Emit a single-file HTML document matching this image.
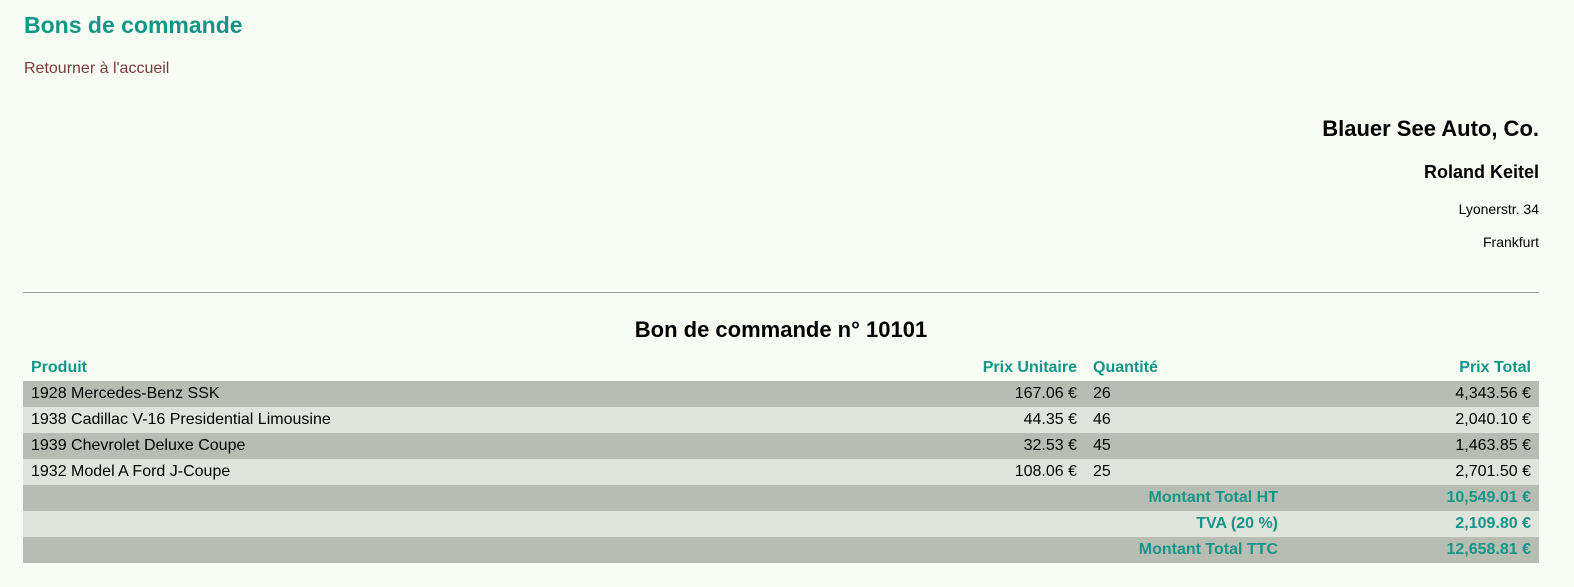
<!DOCTYPE html>
<html><head><meta charset="utf-8"><style>
body{margin:0;background:#f7fdf3;font-family:"Liberation Sans",Arial,sans-serif;color:#000;}
.wrap{position:relative;width:1574px;height:587px;}
.abs{position:absolute;white-space:nowrap;}
h1{position:absolute;left:24px;top:12px;margin:0;font-size:23px;color:#139688;font-weight:bold;}
.link{left:24px;top:60px;font-size:16px;color:#7a3b3b;}
.r{right:35px;text-align:right;}
hr{position:absolute;left:23px;top:292px;width:1516px;margin:0;border:0;border-top:1px solid #999;}
h2{position:absolute;left:0;width:1562px;text-align:center;top:317px;margin:0;font-size:22px;}
table{position:absolute;left:23px;top:355px;border-collapse:collapse;font-size:16px;width:1516px;}
td,th{height:26px;padding:0 8px;box-sizing:border-box;}
th{color:#139688;font-weight:bold;}
tr.d td{background:#b8bdb3;}tr.l td{background:#e0e4dc;}
.t{color:#139688;font-weight:bold;}
</style></head><body><div class="wrap">
<h1>Bons de commande</h1>
<div class="abs link">Retourner à l'accueil</div>
<div class="abs r" style="top:116px;font-size:22px;font-weight:bold">Blauer See Auto, Co.</div>
<div class="abs r" style="top:162px;font-size:18px;font-weight:bold">Roland Keitel</div>
<div class="abs r" style="top:201px;font-size:14px">Lyonerstr. 34</div>
<div class="abs r" style="top:234px;font-size:14px">Frankfurt</div>
<hr>
<h2>Bon de commande n° 10101</h2>
<table>
<colgroup><col style="width:877px"><col style="width:185px"><col style="width:201px"><col style="width:253px"></colgroup>
<tr><th style="text-align:left">Produit</th><th style="text-align:right">Prix Unitaire</th><th style="text-align:left">Quantité</th><th style="text-align:right">Prix Total</th></tr>
<tr class="d"><td>1928 Mercedes-Benz SSK</td><td align="right">167.06 €</td><td>26</td><td align="right">4,343.56 €</td></tr>
<tr class="l"><td>1938 Cadillac V-16 Presidential Limousine</td><td align="right">44.35 €</td><td>46</td><td align="right">2,040.10 €</td></tr>
<tr class="d"><td>1939 Chevrolet Deluxe Coupe</td><td align="right">32.53 €</td><td>45</td><td align="right">1,463.85 €</td></tr>
<tr class="l"><td>1932 Model A Ford J-Coupe</td><td align="right">108.06 €</td><td>25</td><td align="right">2,701.50 €</td></tr>
<tr class="d"><td colspan="3" align="right" class="t">Montant Total HT</td><td align="right" class="t">10,549.01 €</td></tr>
<tr class="l"><td colspan="3" align="right" class="t">TVA (20 %)</td><td align="right" class="t">2,109.80 €</td></tr>
<tr class="d"><td colspan="3" align="right" class="t">Montant Total TTC</td><td align="right" class="t">12,658.81 €</td></tr>
</table>
</div></body></html>
